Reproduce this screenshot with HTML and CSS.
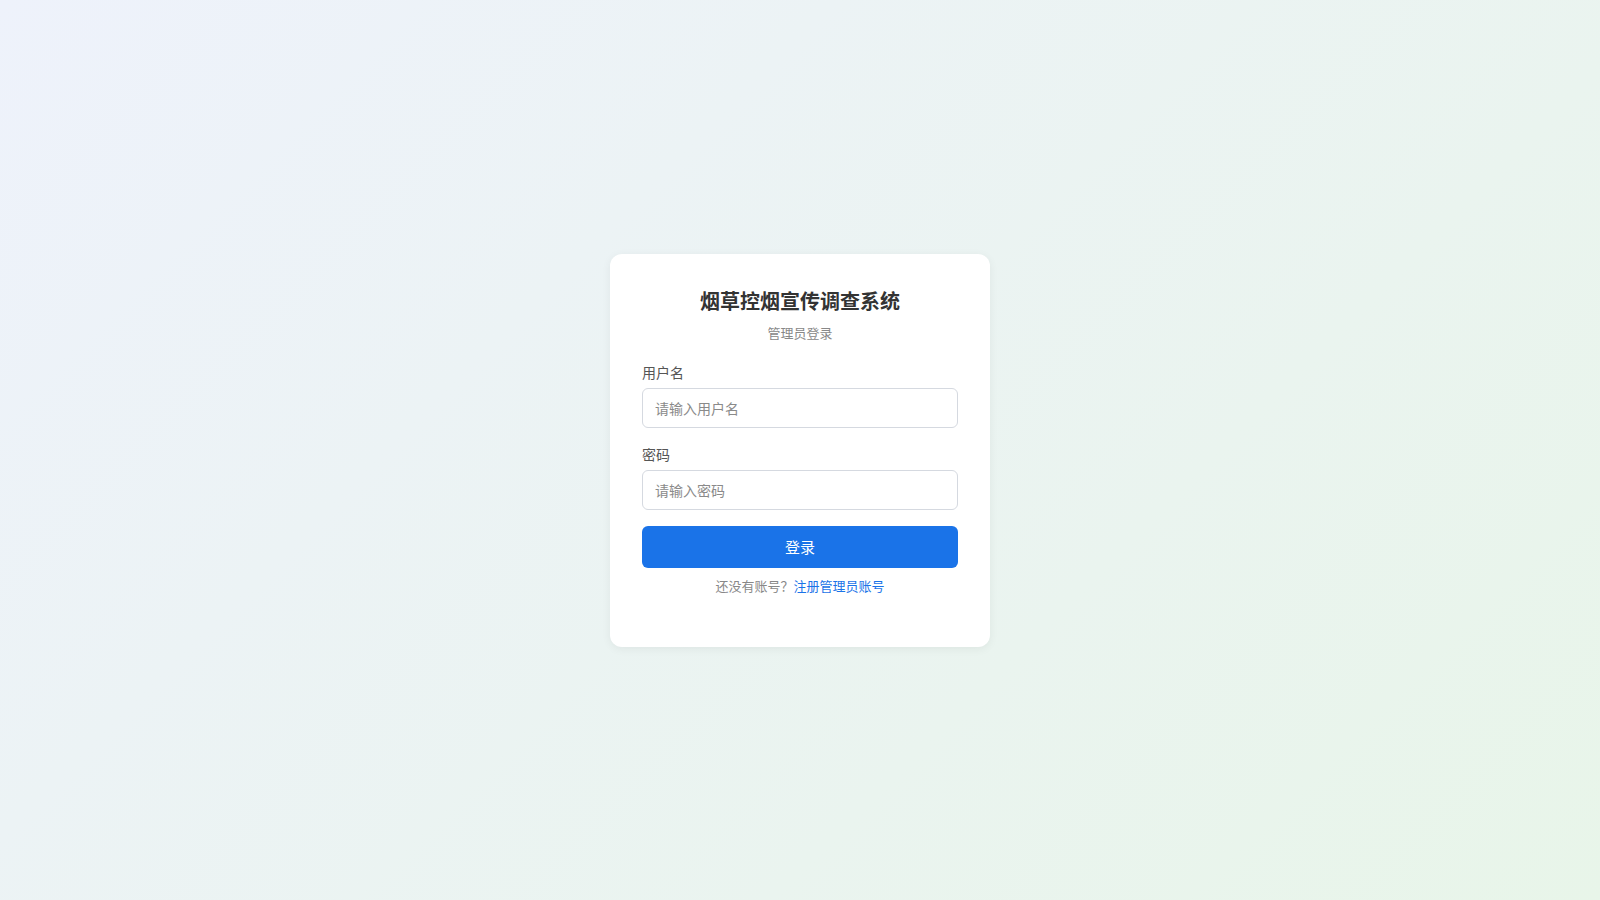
FILE: index.html
```html
<!DOCTYPE html>
<html lang="zh-CN">
<head>
<meta charset="utf-8">
<title>烟草控烟宣传调查系统 - 管理员登录</title>
<link rel="stylesheet" href="styles.css">
</head>
<body>
<div class="page">
  <div class="card">
    <div class="header">
      <h1 class="title">烟草控烟宣传调查系统</h1>
      <p class="subtitle">管理员登录</p>
    </div>
    <form class="form">
      <div class="group">
        <label class="label" for="u">用户名</label>
        <input class="input" id="u" type="text" placeholder="请输入用户名">
      </div>
      <div class="group">
        <label class="label" for="p">密码</label>
        <input class="input" id="p" type="password" placeholder="请输入密码">
      </div>
      <button class="btn" type="button">登录</button>
    </form>
    <p class="footer">还没有账号？<a class="link" href="#">注册管理员账号</a></p>
  </div>
</div>
</body>
</html>
```

FILE: styles.css
```css
* { box-sizing: border-box; }
html, body { margin: 0; padding: 0; height: 100%; }
body {
  font-family: "Noto Sans CJK SC", "Noto Sans", sans-serif;
  background: linear-gradient(135deg, #eef2fb 0%, #e8f5e9 100%);
  color: #333;
}
.page {
  height: 100vh;
  display: flex;
  align-items: center;
  justify-content: center;
}
.card {
  width: 380px;
  background: #fff;
  border-radius: 12px;
  box-shadow: 0 2px 10px rgba(0, 0, 0, 0.06);
  padding: 32px 32px 51px;
}
.header { text-align: center; margin-bottom: 19px; }
.title {
  margin: 0;
  font-size: 20px;
  line-height: 30px;
  font-weight: 700;
  color: #333;
}
.subtitle {
  margin: 7px 0 0;
  font-size: 13px;
  line-height: 20px;
  letter-spacing: 0;
  color: #888;
}
.form { display: flex; flex-direction: column; }
.group { display: flex; flex-direction: column; margin-bottom: 16px; }
.label {
  font-size: 14px;
  line-height: 20px;
  color: #555;
  margin-bottom: 6px;
}
.input {
  height: 40px;
  width: 100%;
  border: 1px solid #d5d9e0;
  border-radius: 6px;
  padding: 0 12px;
  font-family: inherit;
  font-size: 14px;
  color: #333;
  background: #fff;
  outline: none;
}
.input::placeholder { color: #8a8a8a; }
.btn {
  height: 42px;
  width: 100%;
  border: none;
  border-radius: 6px;
  background: #1a73e8;
  color: #fff;
  font-family: inherit;
  font-size: 15px;
  padding-top: 1px;
  cursor: pointer;
}
.footer {
  margin: 8px 0 0;
  text-align: center;
  font-size: 13px;
  line-height: 20px;
  color: #888;
}
.link { color: #1a73e8; text-decoration: none; }
```
